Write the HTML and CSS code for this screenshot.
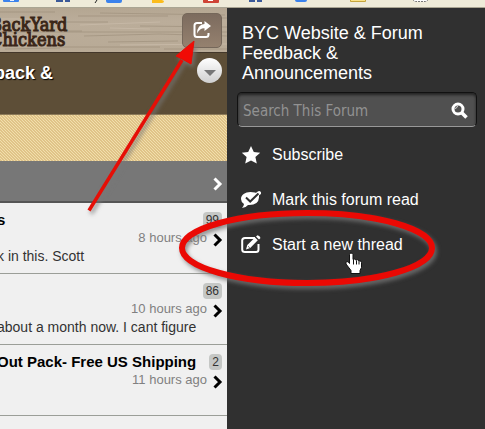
FILE: index.html
```html
<!DOCTYPE html>
<html lang="en">

<head>
    <meta charset="UTF-8">
    <meta name="viewport" content="width=device-width, initial-scale=1.0">
    <title>BackYard Chickens</title>
    <link rel="stylesheet" href="styles.css">
</head>

<body>
    <div class="bookmarks">
        <svg width="485" height="8" viewBox="0 0 485 8" aria-hidden="true">
            <path d="M3 0h16v1q0 1-1 1H4q-1 0-1-1zM106 0h16v1q0 2-2 2h-12q-2 0-2-2zM295 0h12q0 2-2 2h-8q-2 0-2-2z" fill="#3b82ec"/>
            <path d="M10 0h4v1h-4z" fill="#e8f0ff"/>
            <path d="M56 0h7v2h-7zm9 0h5v2h-5zM249 0h6v2h-6zm8 0h5v2h-5z" fill="#3b5998"/>
            <path d="M97 0l-2 3" stroke="#222" fill="none"/>
            <path d="M152 0h10l2 1q0 2-2 2h-10z" fill="#fbbc1c"/>
            <path d="M203 0h16v2q0 1-1 1h-14q-1 0-1-1z" fill="#cf4436"/>
            <path d="M208 0h5v1h-5z" fill="#fff"/>
            <path d="M350.500-1h15v2.500h-15z" fill="#fbe38a" stroke="#c6a63c"/>
            <path d="M413.500-1v1q0 1.500 2 1.500h10q2 0 2-1.500v-1" fill="#fff" stroke="#777" stroke-dasharray="2 1"/>
        </svg>
    </div>

    <div class="layout">
        <div class="page">
            <header class="site-header">
                <svg class="wood" width="227" height="44" viewBox="0 0 227 44" aria-hidden="true">
                    <path d="M0 4h55M78 8h90M100 5l125 2M66 14h42M0 24h227M68 23h14M84 28l75-2 68 2M108 34l70-1M60 39h100M5 41l55-1M205 10h22M140 18l87 1M164 41h63" fill="none" stroke="#9f907d" stroke-width=".7"/>
                    <path d="M80 17l80-3M110 20l40 1M120 37l107-1M0 11h40" fill="none" stroke="#c6b8a6"/>
                </svg>
                <div class="logo">BackYard<br>Chickens</div>
                <button class="share-button" aria-label="Forum menu">
                    <svg width="18" height="18" viewBox="0 0 18 18">
                        <path d="M9 2H4Q1.500 2 1.500 4.500v9Q1.500 16 4 16h9q2.500 0 2.500-2.500V12" fill="none" stroke="#fff" stroke-width="2"/>
                        <path d="M11.500 0l6.500 5-6.500 5V7.300Q7 7 4 12.500 4.300 3.500 11.500 3z" fill="#fff"/>
                    </svg>
                </button>
            </header>

            <div class="forum-title">
                <h1>back &amp;</h1>
                <button class="expand-button" aria-label="Expand"></button>
            </div>

            <div class="banner"></div>

            <div class="section-bar">
                <svg class="chevron" width="10" height="14" viewBox="0 0 10 14" aria-hidden="true"><path d="M1.500 1.500L7 7l-5.500 5.500"/></svg>
            </div>

            <ul class="threads">
                <li class="thread">
                    <div class="thread-head"><h2>s</h2><span class="count">99</span></div>
                    <div class="thread-meta">
                        <span>8 hours ago</span>
                        <svg class="chevron" width="10" height="14" viewBox="0 0 10 14" aria-hidden="true"><path d="M1.500 1.500L7 7l-5.500 5.500"/></svg>
                    </div>
                    <p>k in this. Scott</p>
                </li>
                <li class="thread">
                    <div class="thread-head"><h2></h2><span class="count">86</span></div>
                    <div class="thread-meta">
                        <span>10 hours ago</span>
                        <svg class="chevron" width="10" height="14" viewBox="0 0 10 14" aria-hidden="true"><path d="M1.500 1.500L7 7l-5.500 5.500"/></svg>
                    </div>
                    <p>about a month now. I cant figure</p>
                </li>
                <li class="thread">
                    <div class="thread-head"><h2>Out Pack- Free US Shipping</h2><span class="count">2</span></div>
                    <div class="thread-meta">
                        <span>11 hours ago</span>
                        <svg class="chevron" width="10" height="14" viewBox="0 0 10 14" aria-hidden="true"><path d="M1.500 1.500L7 7l-5.500 5.500"/></svg>
                    </div>
                </li>
            </ul>
        </div>

        <aside class="drawer">
            <h2 class="drawer-title">BYC Website &amp; Forum Feedback &amp; Announcements</h2>
            <form class="search">
                <input type="text" placeholder="Search This Forum" aria-label="Search This Forum">
                <button type="button" aria-label="Search">
                    <svg width="17" height="17" viewBox="0 0 17 17">
                        <circle cx="7" cy="7" r="5" fill="none" stroke="#fff" stroke-width="3"/>
                        <path d="M10.500 10.500l5 5" stroke="#fff" stroke-width="3.500"/>
                        <path d="M4.500 7Q5 4.500 7 4.500" fill="none" stroke="#ddd"/>
                    </svg>
                </button>
            </form>
            <nav class="menu">
                <a href="#">
                    <svg width="20" height="20" viewBox="0 0 20 20" aria-hidden="true">
                        <path d="M10 1l2.800 6 6.400.7-4.800 4.400 1.400 6.500L10 15.400l-5.800 3.200 1.400-6.500L.8 7.700 7.200 7z" fill="#fff"/>
                    </svg>
                    <span>Subscribe</span>
                </a>
                <a href="#">
                    <svg width="20" height="20" viewBox="0 0 20 20" aria-hidden="true">
                        <path d="M9.500 2C4 2 0 5 0 9q0 3 3 5-.3 2.500-2 4 4-.3 6-3 10.500.5 11-7.500L18 4Q14 2 9.500 2z" fill="#fff"/>
                        <path d="M16 4.500l2-1.500" fill="none" stroke="#fff" stroke-width="4" stroke-linecap="round"/>
                        <path d="M5 7.500l4.200 4 8.300-8" fill="none" stroke="#303030" stroke-width="2"/>
                    </svg>
                    <span>Mark this forum read</span>
                </a>
                <a href="#">
                    <svg width="20" height="20" viewBox="0 0 20 20" aria-hidden="true">
                        <path d="M14 3H4Q1.200 3 1.200 5.500v9Q1.200 17 4 17h11q2.500 0 2.500-2.500V9" fill="none" stroke="#fff" stroke-width="2"/>
                        <path d="M5 14.500l1.300-4.500 7.700-7.500 2.800 2.800-7.600 7.700zM15 1.500L16.500.2q2.500.5 3 2.800L18 4.400z" fill="#fff"/>
                        <path d="M7.300 11.500l1.300 1.200" stroke="#303030" fill="none"/>
                    </svg>
                    <span>Start a new thread</span>
                </a>
            </nav>
        </aside>
    </div>

    <!-- arrow, circle and pointer drawn over the page -->
    <svg class="markup" width="485" height="429" viewBox="0 0 485 429" aria-hidden="true">
        <g class="marks">
            <path d="M89 210.500L182 60" fill="none" stroke="#e60e06" stroke-width="3.500"/>
            <path d="M194 41l-18 15 7 3.500 8 4.500z" fill="#f10b05" stroke="#e60e06"/>
            <ellipse cx="307" cy="248" rx="125" ry="35" fill="none" stroke="#ea0904" stroke-width="6"/>
        </g>
        <path d="M349.500 254.500q0-1.500 1.500-1.500t2 1.500v5q1.500-1 3 .5 1.500-.8 3 .7 2.200-.2 2.500 1.800v5l-1.500 3v3h-9v-3l-5-6.500q-.5-2.500 1-2.500 1.500 0 2.500 2z" fill="#fff" stroke="#111"/>
        <path d="M353.500 260v4.500m3-4v4m2.500-3.500v3.500" stroke="#111" fill="none"/>
    </svg>
</body>

</html>
```
FILE: styles.css
```css
* {
    box-sizing: border-box;
}

body {
    margin: 0;
    min-height: 100vh;
    display: flex;
    flex-direction: column;
    position: relative;
    overflow-x: hidden;
    background: #f0f0f0;
    font-family: "Liberation Sans", Arial, sans-serif;
    color: #333;
}

h1, h2, p, ul {
    margin: 0;
    padding: 0;
}

button {
    padding: 0;
    border: none;
    cursor: pointer;
}

svg {
    display: block;
    flex-shrink: 0;
}

.bookmarks {
    height: 8px;
    overflow: hidden;
    background: #efebd9;
    border-bottom: 1px solid #aaa593;
}

.layout {
    flex: 1;
    display: grid;
    grid-template-columns: minmax(0, 1fr) 258px;
}

.page {
    overflow: hidden;
}

.site-header {
    position: relative;
    height: 44px;
    display: flex;
    align-items: center;
    justify-content: space-between;
    padding-right: 5px;
    background: linear-gradient(#b4a692, #bbad9a 30%, #b8aa96);
}

.wood {
    position: absolute;
    top: 0;
    left: 0;
}

.logo {
    position: relative;
    margin-left: -10px;
    padding-top: 3px;
    font-family: "DejaVu Serif Condensed", "DejaVu Serif", serif;
    font-size: 18px;
    line-height: 15px;
    color: #3a2618;
    -webkit-text-stroke: 1px #3a2618;
}

.share-button {
    position: relative;
    width: 40px;
    height: 35px;
    display: flex;
    align-items: center;
    justify-content: center;
    border: 1px solid #75675a;
    border-radius: 5px;
    background: linear-gradient(#7c6b5e, #95816f);
}

.forum-title {
    height: 63px;
    display: flex;
    align-items: flex-start;
    justify-content: space-between;
    padding: 5px 5px 0 0;
    background: #5d4e37;
    border-top: 1px solid #43372a;
    border-bottom: 1px solid #8c7a58;
}

.forum-title h1 {
    margin-left: -6px;
    padding-top: 5px;
    font-size: 18px;
    line-height: 20px;
    color: #fff;
    text-shadow: 1px 1px 1px #000;
}

.expand-button {
    width: 25px;
    height: 25px;
    display: flex;
    align-items: center;
    justify-content: center;
    border-radius: 50%;
    background: linear-gradient(#fff, #cfcfcf);
}

.expand-button::after {
    content: "";
    margin-top: 4px;
    border: 6px solid transparent;
    border-top-color: #777;
    border-bottom: none;
}

.banner {
    height: 46px;
    background: linear-gradient(45deg, #e0c388 25%, #f1dfac 25% 50%, #e0c388 50% 75%, #f1dfac 75%) 0 0 / 3px 3px;
}

.section-bar {
    height: 42px;
    display: flex;
    align-items: center;
    justify-content: flex-end;
    padding: 6px 4px 0 0;
    background: #777;
    border-bottom: 2px solid #555;
}

.chevron {
    fill: none;
    stroke: #000;
    stroke-width: 3;
}

.section-bar .chevron {
    stroke: #fff;
}

.threads {
    margin-left: -3px;
    list-style: none;
}

.thread {
    height: 71px;
    padding-top: 8px;
    border-bottom: 1px solid #9b9e98;
}

.thread-head {
    height: 18px;
    display: flex;
    align-items: center;
    justify-content: space-between;
    padding-right: 5px;
}

.thread-head h2 {
    font-size: 15px;
    line-height: 18px;
    color: #000;
    white-space: nowrap;
}

.count {
    padding: 0 3px;
    border-radius: 4px;
    background: #c5c7c5;
    font-size: 12px;
    line-height: 16px;
}

.thread-meta {
    height: 18px;
    display: flex;
    align-items: flex-end;
    justify-content: flex-end;
    gap: 6px;
    padding-right: 4px;
    font-size: 13px;
    line-height: 18px;
    color: #808080;
}

.thread p {
    font-size: 14px;
    line-height: 18px;
    white-space: nowrap;
}

.drawer {
    padding: 15px 8px 0 10px;
    background: #303030;
    color: #fff;
}

.drawer-title {
    padding: 0 50px 0 5px;
    font-size: 18px;
    font-weight: normal;
    line-height: 20px;
}

.search {
    height: 35px;
    display: flex;
    align-items: center;
    margin: 9px 0 5px;
    padding: 2px 8px 0 5px;
    border: 1px solid #111;
    border-bottom-color: #999;
    border-radius: 5px;
    background: #505050;
    box-shadow: inset 0 2px 3px #222;
}

.search input {
    flex: 1;
    min-width: 0;
    padding: 0;
    border: none;
    outline: none;
    background: none;
    font-family: "DejaVu Sans Condensed", "DejaVu Sans", sans-serif;
    font-size: 15px;
    color: #fff;
}

.search input::placeholder {
    color: #929292;
}

.search button {
    background: none;
}

.menu a {
    height: 45px;
    display: flex;
    align-items: center;
    gap: 11px;
    padding-left: 4px;
    font-size: 16px;
    line-height: 20px;
    color: #fff;
    text-decoration: none;
}

.markup {
    position: absolute;
    top: 0;
    left: 0;
    pointer-events: none;
}

.marks {
    filter: drop-shadow(2px 3px 2px rgba(120, 120, 120, 0.8));
}
```
